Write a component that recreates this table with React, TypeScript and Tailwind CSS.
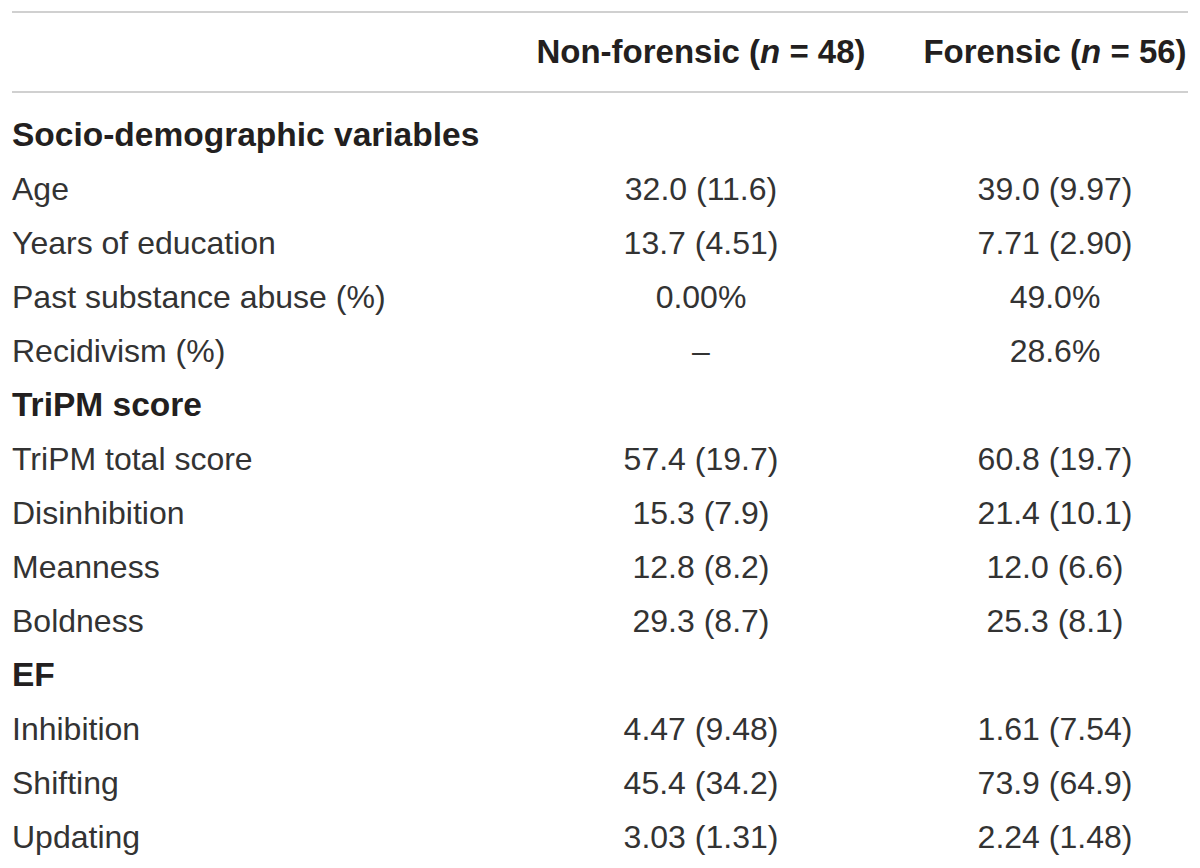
const rows: Array<{ label: string; a?: string; b?: string; head?: boolean }> = [
  { label: 'Socio-demographic variables', head: true },
  { label: 'Age', a: '32.0 (11.6)', b: '39.0 (9.97)' },
  { label: 'Years of education', a: '13.7 (4.51)', b: '7.71 (2.90)' },
  { label: 'Past substance abuse (%)', a: '0.00%', b: '49.0%' },
  { label: 'Recidivism (%)', a: '–', b: '28.6%' },
  { label: 'TriPM score', head: true },
  { label: 'TriPM total score', a: '57.4 (19.7)', b: '60.8 (19.7)' },
  { label: 'Disinhibition', a: '15.3 (7.9)', b: '21.4 (10.1)' },
  { label: 'Meanness', a: '12.8 (8.2)', b: '12.0 (6.6)' },
  { label: 'Boldness', a: '29.3 (8.7)', b: '25.3 (8.1)' },
  { label: 'EF', head: true },
  { label: 'Inhibition', a: '4.47 (9.48)', b: '1.61 (7.54)' },
  { label: 'Shifting', a: '45.4 (34.2)', b: '73.9 (64.9)' },
  { label: 'Updating', a: '3.03 (1.31)', b: '2.24 (1.48)' },
]

export default function App() {
  return (
    <div className="w-[1200px] h-[868px] bg-white pt-[11px] pl-[12px] font-['Liberation_Sans',Arial,sans-serif] text-[#231f20]">
      <div className="w-[1176px]">
        <div className="grid grid-cols-[468px_442px_266px] h-[82px] items-center border-t-2 border-b-2 border-[#d0d0d0] text-[33px] font-bold">
          <div />
          <div className="text-center">
            Non-forensic (<i>n</i> = 48)
          </div>
          <div className="text-center">
            Forensic (<i>n</i> = 56)
          </div>
        </div>
        <div className="pt-[15px]">
          {rows.map((r) =>
            r.head ? (
              <div key={r.label} className="h-[54px] flex items-center text-[33.5px] font-bold">
                {r.label}
              </div>
            ) : (
              <div key={r.label} className="grid grid-cols-[468px_442px_266px] h-[54px] items-center text-[32px] text-[#333333]">
                <div>{r.label}</div>
                <div className="text-center">{r.a}</div>
                <div className="text-center">{r.b}</div>
              </div>
            ),
          )}
        </div>
      </div>
    </div>
  )
}
